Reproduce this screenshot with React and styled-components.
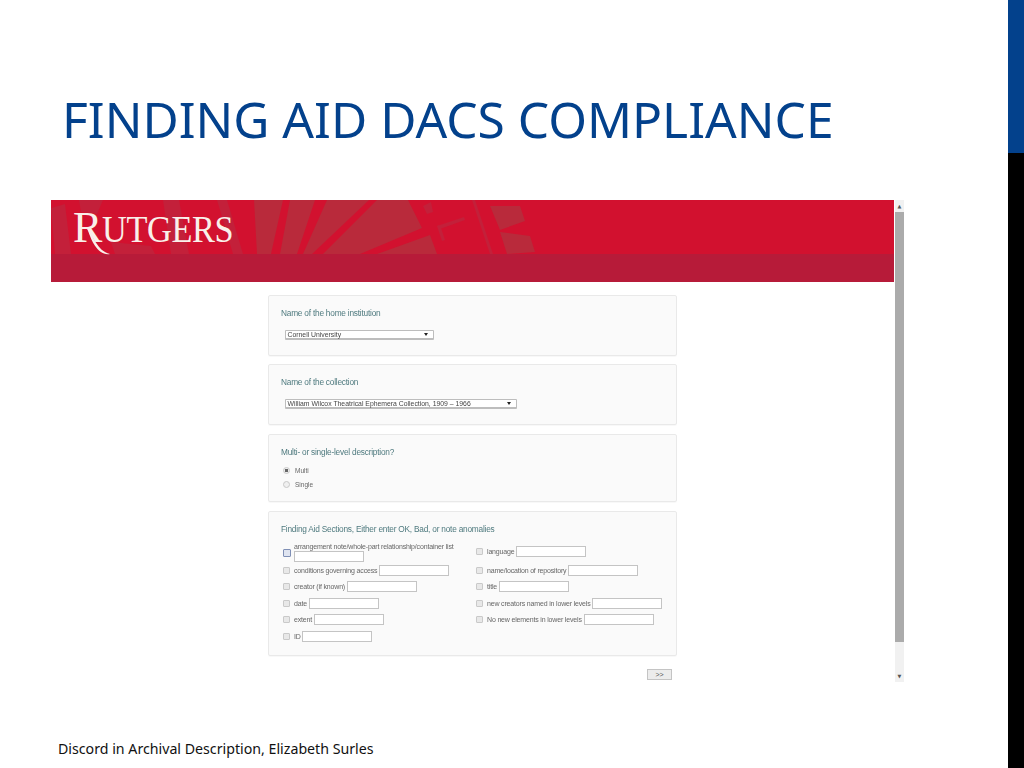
import React from 'react'
import styled, { createGlobalStyle } from 'styled-components'

const COLORS = {
  BLUE: '#03418c',
  RED: '#d2112f',
  RED_BAND: '#b71b39',
  RAY: '#b92a3b',
  RAY_FAINT: '#c3203a',
  TEAL: '#4f7a7f',
  FIELD_TEXT: '#666',
  FIELD_BORDER: '#c4c4c4',
  LOGO: '#f9f0ea'
}

const GlobalStyle = createGlobalStyle`
  html, body {
    background: #fff;
    height: 100%;
    margin: 0;
    overflow: hidden;
  }
`

const Slide = styled.div`
  display: flex;
  font-family: "Noto Sans", sans-serif;
  height: 768px;
  width: 1024px;
`

const Main = styled.main`
  box-sizing: border-box;
  display: flex;
  flex: 1;
  flex-direction: column;
  padding: 88px 0 0 51px;
`

const Title = styled.h1`
  color: ${COLORS.BLUE};
  font-size: 49.7px;
  font-weight: 400;
  line-height: 62px;
  margin: 0 0 50px 11px;
  white-space: nowrap;
`

const Footer = styled.footer`
  color: #111;
  font-size: 14.2px;
  line-height: 20px;
  margin: 57px 0 0 7px;
`

const SideBar = styled.aside`
  background: #000;
  width: 16px;
`

const SideBarCap = styled.div`
  background: ${COLORS.BLUE};
  height: 153px;
`

// ---------------------------------------------------------------------------//
// WEB PAGE SCREENSHOT
// ---------------------------------------------------------------------------//
const Shot = styled.div`
  display: flex;
  gap: 1px;
  height: 482px;
  width: 853px;
`

const ShotPage = styled.div`
  display: flex;
  flex-direction: column;
  width: 843px;
`

const ScrollBar = styled.div`
  align-items: center;
  background: #f1f1f1;
  display: flex;
  flex-direction: column;
  height: 482px;
  width: 9px;
`

const ScrollArrow = styled.div`
  align-items: center;
  color: #555;
  display: flex;
  font-family: "DejaVu Sans", sans-serif;
  font-size: 5px;
  height: 12px;
  justify-content: center;
`

const ScrollThumb = styled.div`
  background: #ababab;
  height: 430px;
  margin-bottom: auto;
  width: 100%;
`

const Banner = styled.header`
  background: ${COLORS.RED_BAND};
  height: 82px;
  overflow: hidden;
`

const BannerTop = styled.div`
  background: ${COLORS.RED};
  height: 54px;
  padding-left: 22px;
  position: relative;
`

const Rays = styled.svg`
  height: 54px;
  left: 0;
  position: absolute;
  top: 0;
  width: 843px;
`

const Logo = styled.div`
  color: ${COLORS.LOGO};
  font-family: "Liberation Serif", serif;
  font-size: 37.5px;
  letter-spacing: -0.4px;
  line-height: 54px;
  position: relative;
  top: 1px;
  white-space: nowrap;
`

const LogoCap = styled.span`
  font-size: 44px;
  letter-spacing: 0;
`

const LogoRest = styled.span`
  display: inline-block;
  transform: scaleX(0.915);
  transform-origin: left center;
`

const LogoTail = styled.svg`
  height: 30px;
  left: 14px;
  position: absolute;
  top: 26px;
  width: 30px;
`

const Form = styled.form`
  color: ${COLORS.FIELD_TEXT};
  display: flex;
  filter: blur(0.3px);
  flex-direction: column;
  font-family: "Liberation Sans", sans-serif;
  margin-left: 217px;
  padding-top: 13px;
  width: 409px;
`

const Panel = styled.section`
  background: #fafafa;
  border: 1px solid #e9e9e9;
  border-radius: 2px;
  box-shadow: 0 1px 1px rgba(0, 0, 0, 0.03);
  box-sizing: border-box;
  height: ${props => props.$height}px;
  margin-bottom: ${props => props.$gap}px;
  padding: 11px 12px 0;
`

const PanelTitle = styled.h2`
  color: ${COLORS.TEAL};
  font-size: 8.3px;
  font-weight: 400;
  letter-spacing: -0.22px;
  line-height: 12px;
  margin: 0 0 ${props => props.$gap || 0}px;
`

const FakeSelect = styled.div`
  align-items: center;
  background: #fff;
  border: 1px solid #bdbdbd;
  border-bottom-width: 2px;
  border-radius: 1px;
  box-sizing: border-box;
  color: #444;
  display: flex;
  font-size: 6.85px;
  height: 10px;
  justify-content: space-between;
  margin: 10.5px 0 0 3.5px;
  padding: 0 5px 0 2px;
  width: ${props => props.$width}px;
`

const SelectArrow = styled.span`
  border-left: 2px solid transparent;
  border-right: 2px solid transparent;
  border-top: 3px solid #222;
`

const RadioRow = styled.label`
  align-items: center;
  display: flex;
  font-size: 6.5px;
  gap: 5px;
  height: 14px;
  margin-left: 2px;
`

const Radio = styled.span`
  background: ${props => props.$checked ? 'radial-gradient(circle, #666 0 1.5px, #eee 2px)' : '#f0f0f0'};
  border: 1px solid #c8c8c8;
  border-radius: 50%;
  box-sizing: border-box;
  height: 7px;
  width: 7px;
`

const SectionGrid = styled.div`
  display: grid;
  grid-auto-flow: column;
  grid-template-columns: 193px 1fr;
  grid-template-rows: 19px repeat(5, 16.5px);
  margin: 8px 0 0 2px;
`

const Row = styled.label`
  align-items: center;
  display: flex;
  font-size: 7px;
  letter-spacing: -0.17px;
  margin-bottom: ${props => props.$lift ? 3 : 0}px;
  white-space: nowrap;
`

const CheckBox = styled.span`
  background: ${props => props.$focus ? '#dfe4f0' : '#e8e8e8'};
  border: 1px solid ${props => props.$focus ? '#7f8fb5' : '#c9c9c9'};
  border-radius: 1px;
  box-sizing: border-box;
  flex: none;
  height: ${props => props.$focus ? 8 : 7}px;
  margin-right: ${props => props.$focus ? 3 : 4}px;
  width: ${props => props.$focus ? 8 : 7}px;
`

const TextField = styled.input`
  background: #fff;
  border: 1px solid ${COLORS.FIELD_BORDER};
  box-sizing: border-box;
  display: block;
  flex: none;
  height: 11px;
  margin: 0;
  padding: 0;
  width: 70px;
`

const StackedLabel = styled.div`
  display: flex;
  flex-direction: column;
  line-height: 8px;
  margin-top: -1px;
`

const SubmitRow = styled.div`
  display: flex;
  justify-content: flex-end;
  margin: 13px 5px 0 0;
`

const NextButton = styled.button`
  background: #ececec;
  border: 1px solid #c4c4c4;
  color: #555;
  font-family: "Liberation Sans", sans-serif;
  font-size: 7px;
  height: 11px;
  line-height: 8px;
  padding: 0;
  width: 25px;
`

const LEFT_FIELDS = ['conditions governing access', 'creator (if known)', 'date', 'extent', 'ID']
const RIGHT_FIELDS = [
  'language',
  'name/location of repository',
  'title',
  'new creators named in lower levels',
  'No new elements in lower levels'
]

const RAYS = [
  { points: '0,8 14,4 20,54 4,54', fill: COLORS.RAY_FAINT },
  { points: '28,0 52,0 46,14 30,12', fill: COLORS.RAY_FAINT },
  { points: '60,42 100,46 104,54 64,54', fill: COLORS.RAY_FAINT },
  { points: '112,0 128,0 138,54 120,54', fill: COLORS.RAY_FAINT },
  { points: '166,0 176,0 192,54 182,54', fill: COLORS.RAY_FAINT },
  { points: '203,0 232,0 220,54 206,54', fill: COLORS.RAY },
  { points: '239,0 264,0 246,54 229,54', fill: COLORS.RAY },
  { points: '276,0 318,0 261,54 252,54', fill: COLORS.RAY },
  { points: '326,0 357,0 371,28 309,54 272,54', fill: COLORS.RAY },
  { points: '379,35 386,54 326,54', fill: COLORS.RAY },
  { points: '421,0 424,0 442,54 439,54', fill: COLORS.RAY_FAINT },
  { points: '439,6 469,6 474,21 449,30', fill: COLORS.RAY },
  { points: '449,32 479,36 484,52 456,54', fill: COLORS.RAY },
  { points: '386,26 413,17 414,20 389,29', fill: COLORS.RAY_FAINT },
  { points: '386,26 389,25 394,40 391,41', fill: COLORS.RAY_FAINT },
  { points: '372,6 380,2 382,12 376,14', fill: COLORS.RAY_FAINT }
]

const FieldRow = ({ label, lift }) => <Row $lift={lift}>
  <CheckBox />
  {label}&nbsp;
  <TextField readOnly />
</Row>

export default function App () {
  return <Slide>
    <GlobalStyle />
    <Main>
      <Title>FINDING AID DACS COMPLIANCE</Title>
      <Shot>
        <ShotPage>
          <Banner>
            <BannerTop>
              <Rays viewBox='0 0 843 54'>
                {RAYS.map(ray => <polygon key={ray.points} points={ray.points} fill={ray.fill} />)}
              </Rays>
              <Logo>
                <LogoCap>R</LogoCap><LogoRest>UTGERS</LogoRest>
                <LogoTail viewBox='0 0 30 30'>
                  <path d='M0 0 C6 8 10 24 23 27 C11 29 4 14 0 0 Z' fill={COLORS.LOGO} />
                </LogoTail>
              </Logo>
            </BannerTop>
          </Banner>
          <Form>
            <Panel $height={61} $gap={8}>
              <PanelTitle>Name of the home institution</PanelTitle>
              <FakeSelect $width={149}>Cornell University<SelectArrow /></FakeSelect>
            </Panel>
            <Panel $height={61} $gap={9}>
              <PanelTitle>Name of the collection</PanelTitle>
              <FakeSelect $width={232}>William Wilcox Theatrical Ephemera Collection, 1909 – 1966<SelectArrow /></FakeSelect>
            </Panel>
            <Panel $height={68} $gap={9}>
              <PanelTitle $gap={5}>Multi- or single-level description?</PanelTitle>
              <RadioRow><Radio $checked />Multi</RadioRow>
              <RadioRow><Radio />Single</RadioRow>
            </Panel>
            <Panel $height={145} $gap={0}>
              <PanelTitle>Finding Aid Sections, Either enter OK, Bad, or note anomalies</PanelTitle>
              <SectionGrid>
                <Row>
                  <CheckBox $focus />
                  <StackedLabel>
                    arrangement note/whole-part relationship/container list
                    <TextField readOnly />
                  </StackedLabel>
                </Row>
                {LEFT_FIELDS.map(label => <FieldRow key={label} label={label} />)}
                {RIGHT_FIELDS.map((label, i) => <FieldRow key={label} label={label} lift={i === 0} />)}
              </SectionGrid>
            </Panel>
            <SubmitRow>
              <NextButton type='button'>&gt;&gt;</NextButton>
            </SubmitRow>
          </Form>
        </ShotPage>
        <ScrollBar>
          <ScrollArrow>▲</ScrollArrow>
          <ScrollThumb />
          <ScrollArrow>▼</ScrollArrow>
        </ScrollBar>
      </Shot>
      <Footer>Discord in Archival Description, Elizabeth Surles</Footer>
    </Main>
    <SideBar><SideBarCap /></SideBar>
  </Slide>
}
